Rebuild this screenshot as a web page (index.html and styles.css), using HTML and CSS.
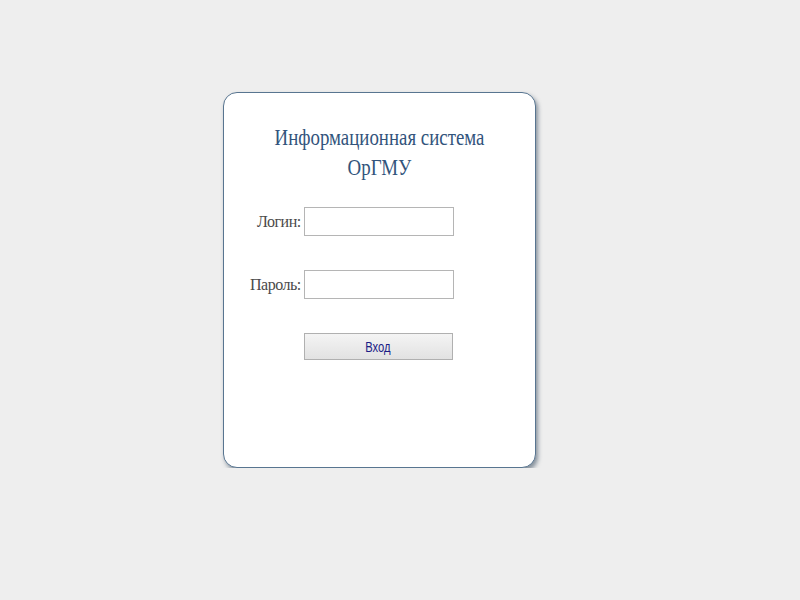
FILE: index.html
```html
<!DOCTYPE html>
<html lang="ru">
<head>
    <meta charset="UTF-8">
    <title>Информационная система ОрГМУ</title>
    <link rel="stylesheet" href="styles.css">
</head>
<body>
    <div class="login-box">
        <h1 class="login-title">Информационная система<br>ОрГМУ</h1>
        <form class="login-form">
            <label for="login">Логин:</label>
            <input type="text" id="login" name="login">

            <label for="password">Пароль:</label>
            <input type="password" id="password" name="password">

            <span></span>
            <button type="submit"><span class="btn-text">Вход</span></button>
        </form>
    </div>
</body>
</html>
```

FILE: styles.css
```css
body {
    margin: 0;
    background: #eeeeee;
    font-family: "Liberation Serif", "Times New Roman", serif;
}
.login-box {
    box-sizing: border-box;
    width: 313px;
    height: 376px;
    margin: 92px 0 0 223px;
    padding: 30px 0 0 26px;
    background: #fff;
    border: 1px solid #587590;
    border-radius: 14px;
    box-shadow: 2px 3px 4px rgba(50, 70, 90, 0.55);
}
.login-title {
    margin: 0 26px 0 0;
    font-weight: normal;
    font-size: 23px;
    line-height: 30px;
    text-align: center;
    color: #32547c;
    transform: scaleX(0.82);
}
.login-form {
    display: grid;
    grid-template-columns: auto 150px;
    justify-content: start;
    align-items: center;
    column-gap: 3px;
    row-gap: 34px;
    margin-top: 24px;
}
.login-form label {
    text-align: right;
    font-size: 16px;
    color: #4a4a4a;
    letter-spacing: -0.5px;
}
.login-form input {
    box-sizing: border-box;
    width: 150px;
    height: 29px;
    border: 1px solid #b5b5b5;
    padding: 2px 4px;
}
.login-form button {
    box-sizing: border-box;
    width: 149px;
    height: 27px;
    border: 1px solid #b0b0b0;
    background: linear-gradient(#f4f4f4, #e2e2e2);
    color: #1c1c86;
    font-family: "Liberation Sans", Arial, sans-serif;
    font-size: 14px;
}
.btn-text {
    display: inline-block;
    transform: scaleX(0.8);
}
```
